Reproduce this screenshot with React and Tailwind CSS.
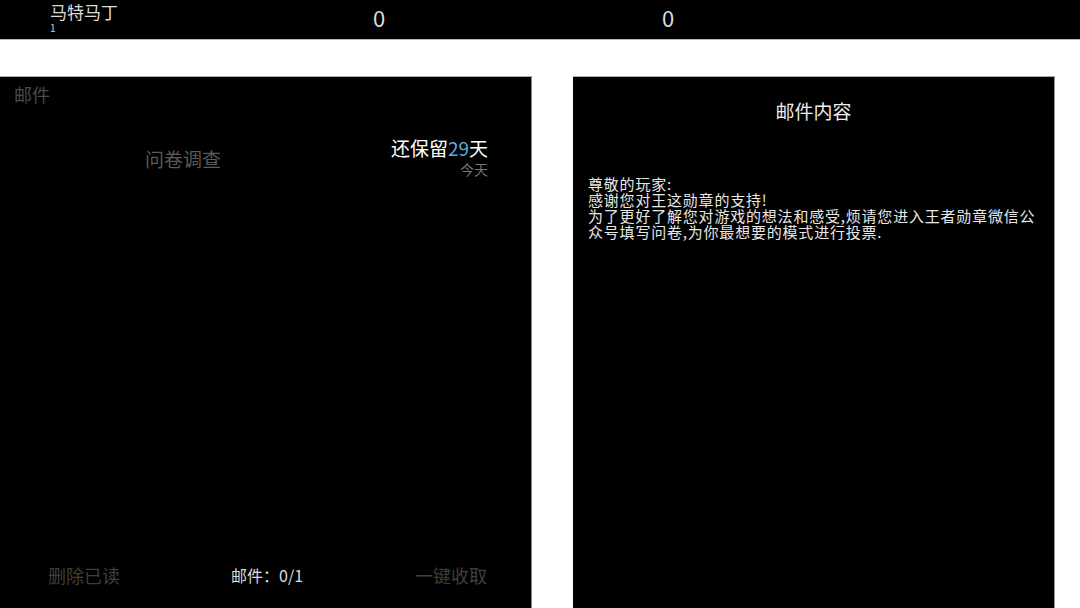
export default function App() {
  const font = { fontFamily: '"Noto Sans CJK SC", "Noto Sans", sans-serif' };
  return (
    <div className="w-[1080px] h-[608px] bg-white overflow-hidden flex flex-col" style={font}>
      {/* top bar */}
      <div className="h-[40px] bg-black border-b border-[#bbb] flex items-start shrink-0">
        <div className="w-[340px] pl-[50px] flex flex-col">
          <span className="text-[17px] leading-[18px] text-[#ddd] mt-[3px]">马特马丁</span>
          <span className="text-[10px] leading-[12px] text-[#ccc] mt-[1px]">1</span>
        </div>
        <div className="w-[78px] text-center text-[22px] leading-[22px] text-[#ddd] mt-[6px]">0</div>
        <div className="w-[211px]" />
        <div className="w-[78px] text-center text-[22px] leading-[22px] text-[#ddd] mt-[6px]">0</div>
      </div>

      <div className="flex mt-[36px] flex-1">
        {/* left panel */}
        <div className="w-[532px] bg-black border-t border-[#aaa] border-r border-r-[#888] flex flex-col">
          <div className="pl-[14px] pt-[6px] text-[18px] leading-[22px] text-[#4a4a4a]">邮件</div>
          <div className="flex items-start mt-[31px]">
            <div className="w-[366px] text-center text-[19px] leading-[24px] text-[#5a5a5a] mt-[11px]">问卷调查</div>
            <div className="w-[122px] flex flex-col items-end">
              <span className="text-[19px] leading-[24px] text-white">
                还保留<span className="text-[#5aaee8]">29</span>天
              </span>
              <span className="text-[14px] leading-[18px] text-[#777]">今天</span>
            </div>
          </div>
          <div className="flex-1" />
          <div className="flex items-center h-[22px] mb-[22px] pl-[48px]">
            <div className="w-[72px] text-[18px] text-[#3f3f3f]">删除已读</div>
            <div className="w-[111px]" />
            <div className="w-[80px] text-[#ddd] text-[16px]">邮件：0/1</div>
            <div className="w-[104px]" />
            <div className="w-[72px] text-[18px] text-[#3f3f3f]">一键收取</div>
          </div>
        </div>

        <div className="w-[41px]" />

        {/* right panel */}
        <div className="w-[482px] bg-black border-t border-[#aaa] border-r border-r-[#999] flex flex-col">
          <div className="text-center text-[19px] leading-[24px] text-[#eee] mt-[22px]">邮件内容</div>
          <div className="pl-[15px] pr-[14px] mt-[53px] text-[15px] tracking-[0.8px] leading-[16px] text-[#e8e8e8]">
            <p>尊敬的玩家:</p>
            <p>感谢您对王这勋章的支持!</p>
            <p>为了更好了解您对游戏的想法和感受,烦请您进入王者勋章微信公众号填写问卷,为你最想要的模式进行投票.</p>
          </div>
        </div>
      </div>
    </div>
  );
}
